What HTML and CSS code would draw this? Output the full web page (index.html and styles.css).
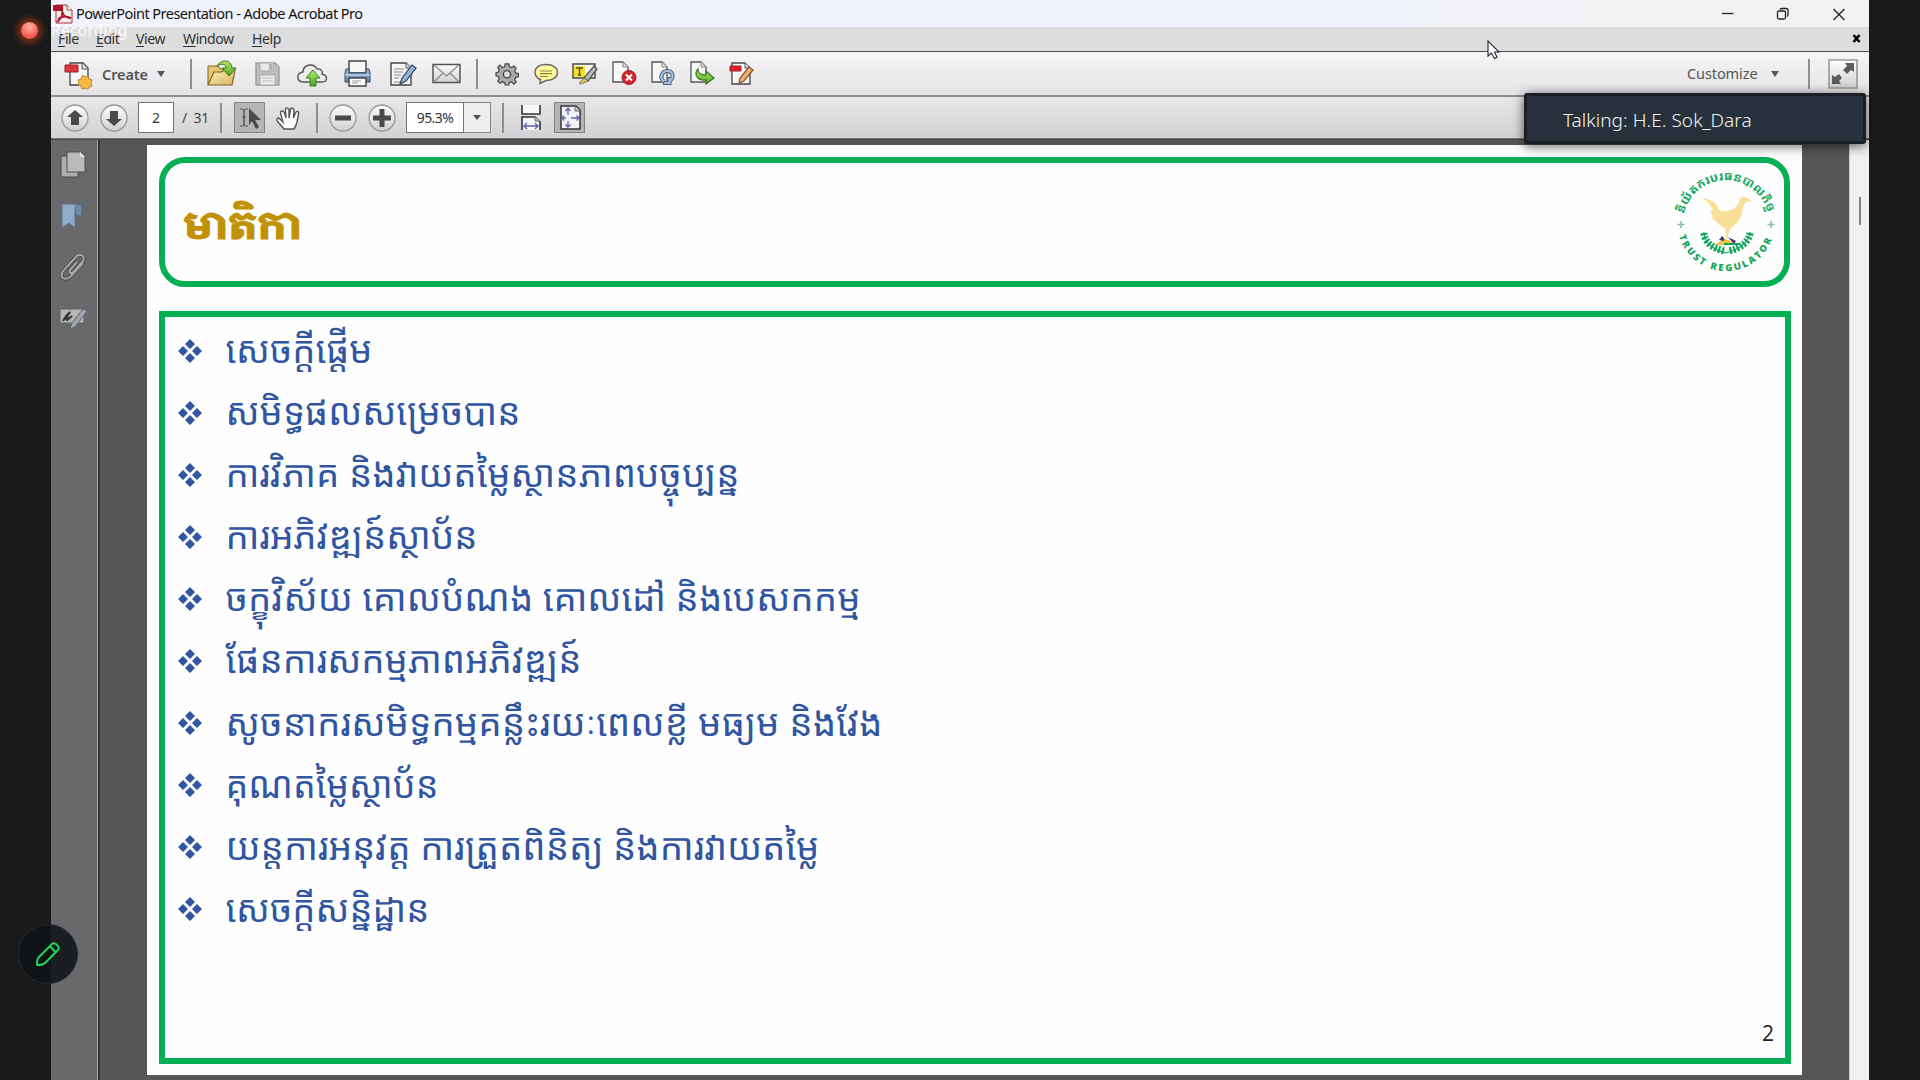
FILE: index.html
```html
<!DOCTYPE html>
<html lang="en">
<head>
<meta charset="utf-8">
<title>PowerPoint Presentation - Adobe Acrobat Pro</title>
<link rel="stylesheet" href="styles.css">
</head>
<body>
<svg width="0" height="0" class="defs">
  <defs>
    <linearGradient id="gray" x1="0" y1="0" x2="0" y2="1"><stop offset="0" stop-color="#fff"/><stop offset="1" stop-color="#cfcfcf"/></linearGradient>
    <linearGradient id="green" x1="0" y1="0" x2="0" y2="1"><stop offset="0" stop-color="#b2ea72"/><stop offset="1" stop-color="#4fa61e"/></linearGradient>
    <linearGradient id="folder" x1="0" y1="0" x2="1" y2="1"><stop offset="0" stop-color="#fdf0b8"/><stop offset="1" stop-color="#d9b65e"/></linearGradient>
    <linearGradient id="blue" x1="0" y1="0" x2="0" y2="1"><stop offset="0" stop-color="#9cc0e2"/><stop offset="1" stop-color="#5a80aa"/></linearGradient>
    <symbol id="sheet" viewBox="0 0 32 32"><path d="M8 5h10l5 5v15H8z" fill="#f7f7f7" stroke="#555" stroke-width="1.3"/><path d="M18 5v5h5" fill="#ddd" stroke="#888"/></symbol>
    <symbol id="diamonds" viewBox="0 0 24 24"><path d="M12 0l5 5-5 5-5-5zM5 7l5 5-5 5-5-5zM19 7l5 5-5 5-5-5zM12 14l5 5-5 5-5-5z"/></symbol>
  </defs>
</svg>
<div class="screen">
  <main class="app">
    <header class="titlebar">
      <svg class="app-icon" width="20" height="20" viewBox="0 0 20 20"><path d="M3 1h11l5 5v13H3z" fill="#eee" stroke="#a33" /><path d="M14 1v5h5" fill="#fff" stroke="#a44"/><path d="M0 1h10v6H0z" fill="#b3132b"/><path d="M9 6c1 4 0 8-5 12M9 7c1 4 4 7 9 7M5 15c4-3 8-3 13-1" fill="none" stroke="#b3132b" stroke-width="1.8"/></svg>
      <span class="title">PowerPoint Presentation - Adobe Acrobat Pro</span>
      <svg class="win-controls" width="136" height="20" viewBox="0 0 136 20"><g fill="none" stroke="#222" stroke-width="1.3"><path d="M6 9.5h11.500"/><rect x="61.500" y="7" width="8" height="8" rx="1.500"/><path d="M64 5.500q.5-1 2-1h4q2 0 2 2v4q0 1.500-1 2"/><path d="M117.500 5l11 11M128.500 5l-11 11"/></g></svg>
    </header>
    <nav class="menubar">
      <span class="m-file"><u>F</u>ile</span><span class="m-edit"><u>E</u>dit</span><span class="m-view"><u>V</u>iew</span><span class="m-window"><u>W</u>indow</span><span class="m-help"><u>H</u>elp</span>
      <svg class="close-doc" width="9" height="9" viewBox="0 0 9 9"><path d="M1.500 1l6 7M7.500 1l-6 7" stroke="#000" stroke-width="2.600"/></svg>
    </nav>
    <div class="toolbar">
      <button class="create">
        <svg width="32" height="32" viewBox="0 0 32 32"><path d="M8 5h13l5 5v17H8z" fill="#f7f7f7" stroke="#444" stroke-width="1.300"/><path d="M20 5v6h6" fill="#ddd" stroke="#555"/><path d="M3 7h13v7H3z" fill="#d9363f" stroke="#a51c28"/><path d="M21 17l2 2 3-1 1 3 3 1-1 3 1 3-3 1-1 2-3-1-3 1-1-3-3-1 1-3-1-2 3-1z" fill="#f6b945" stroke="#b9812a"/></svg>
        <span>Create</span><i class="caret"></i>
      </button>
      <i class="sep sep-a"></i>
      <div class="group files">
        <svg width="32" height="32" viewBox="0 0 32 32"><path d="M2 8h10l2 3h12v15H2z" fill="#e5c66e" stroke="#806127"/><path d="M2 27l6-13h8l2-2h11l-3 15z" fill="url(#folder)" stroke="#806127" stroke-width="1.200"/><path d="M11 8C15 1 25 1 26 10h4l-7 8-7-8h4c0-4-4-5-9-2z" fill="url(#green)" stroke="#347a16"/></svg>
        <svg width="32" height="32" viewBox="0 0 32 32"><path d="M5 5h19l4 4v18H5z" fill="#bdbdbd" stroke="#9c9c9c" stroke-width="1.400"/><path d="M9 5h13v8H9z" fill="#e7e7e7" stroke="#aaa"/><path d="M18 6h3v6h-3z" fill="#b2b2b2"/><path d="M9 17h15v10H9z" fill="#eee" stroke="#a9a9a9"/><path d="M11 20h11M11 23h11" stroke="#bbb"/></svg>
        <svg width="32" height="32" viewBox="0 0 32 32"><path d="M8 24c-8 0-8-9-1-10 0-7 10-10 14-3 5-1 6 4 5 5 7 2 5 8 0 8z" fill="#ececec" stroke="#555" stroke-width="1.400"/><path d="M17 12l7 8h-4v8h-6v-8h-4z" fill="url(#green)" stroke="#348020"/></svg>
        <svg width="32" height="32" viewBox="0 0 32 32"><path d="M8 3h17v12H8z" fill="#f6f6f6" stroke="#444" stroke-width="1.400"/><path d="M5 11h3v4h17v-4h3l1 4v9H4v-9z" fill="url(#blue)" stroke="#2e4965"/><path d="M4 17h25" stroke="#dce9f5"/><path d="M8 20h17v8H8z" fill="#fff" stroke="#444" stroke-width="1.400"/><path d="M11 23h9M11 25h6" stroke="#999"/></svg>
        <svg width="32" height="32" viewBox="0 0 32 32"><path d="M5 5h15l5 5v17H5z" fill="#f5f5f5" stroke="#444" stroke-width="1.400"/><path d="M20 5v5h5" fill="#ddd" stroke="#555"/><path d="M8 11h10M8 14h9M8 17h7M8 20h5M8 24h9" stroke="#888"/><path d="M26 7l4 3-10 13-6 3 2-6z" fill="#8fb4dc" stroke="#2f455f" stroke-width="1.200"/></svg>
        <svg width="32" height="32" viewBox="0 0 32 32"><path d="M2 6.500h27v18H2z" fill="url(#gray)" stroke="#555" stroke-width="1.500"/><path d="M3 7l12.500 11L28 7M3 24l9-9M28 24l-9-9" fill="none" stroke="#888" stroke-width="1.200"/></svg>
      </div>
      <i class="sep sep-b"></i>
      <div class="group edit">
        <svg width="32" height="32" viewBox="-1.500 -1.500 35 35"><path d="M14 5h4l.6 3 2.400 1 2.600-1.700 2.500 2.500-1.700 2.700 1 2.300 3 .7v3.500l-3 .7-1 2.300 1.700 2.700-2.500 2.500L21 24.500l-2.400 1-.6 2.500h-4l-.6-2.500-2.400-1-2.600 1.700-2.500-2.500 1.700-2.700-1-2.300-2.600-.7v-3.500l2.600-.7 1-2.300-1.700-2.700 2.500-2.500L11 9l2.400-1z" fill="#aaa" stroke="#444" stroke-width="1.300"/><circle cx="16" cy="16.300" r="4" fill="#ddd" stroke="#444" stroke-width="1.500"/></svg>
        <svg width="32" height="32" viewBox="0 0 32 32"><path d="M16 6.500c7.500 0 11.500 3.500 11.500 8S23 22.500 16 22.500l-6 3 .5-4C2 18.500 3 6.500 16 6.500z" fill="#fcf79b" stroke="#666" stroke-width="1.400"/><path d="M10 13h12M10 15.700h12M10 18.500h8" stroke="#8d853d" stroke-width="1.200"/></svg>
        <svg width="32" height="32" viewBox="0 0 32 32"><path d="M4 6h22v14H4z" fill="#fff" stroke="#444" stroke-width="1.400"/><path d="M5 8h11v11H5z" fill="#f4df2a"/><path d="M7 10h7M10.500 10v7M9 17h3" stroke="#554b0d" stroke-width="1.300"/><path d="M25 8l3 3-9 12-4-3z" fill="#bbb" stroke="#555" stroke-width="1.300"/><path d="M15 20l4 3-7 3-2-1z" fill="#d7ca57" stroke="#777"/></svg>
        <svg width="32" height="32" viewBox="0 0 32 32"><use href="#sheet" x="-3" y="-1" width="32" height="32"/><circle cx="21" cy="19.500" r="7" fill="#d3262e" stroke="#9f1a22"/><path d="M18 16.500l6 6M24 16.500l-6 6" stroke="#fff" stroke-width="2"/></svg>
        <svg width="32" height="32" viewBox="0 0 32 32"><use href="#sheet" x="-3" y="-1" width="32" height="32"/><path d="M17 23.500c-5-4-2-10.500 3.500-10.500 6 0 7 8 1 10.500M16 25h6.500v-6" fill="none" stroke="#49627d" stroke-width="4"/><path d="M17 23.500c-5-4-2-10.500 3.500-10.500 6 0 7 8 1 10.500M17 25h5.500v-5" fill="none" stroke="#a9c4de" stroke-width="2"/></svg>
        <svg width="32" height="32" viewBox="0 0 32 32"><use href="#sheet" x="-3" y="-1" width="32" height="32"/><path d="M12 11c0 5 3 6 8 6v-4l8 7-8 6v-4c-8 1-13-5-8-11z" fill="url(#green)" stroke="#347a20" stroke-width="1.200"/></svg>
        <svg width="32" height="32" viewBox="0 0 32 32"><path d="M7 5h13l5 5v16H7z" fill="#f8f8f8" stroke="#444" stroke-width="1.300"/><path d="M20 5v5h5" fill="#ddd" stroke="#555"/><path d="M5 8h11v5H5z" fill="#d8232d" stroke="#aa1720"/><path d="M24 9l4 3-9 11-5 2 1-5z" fill="#efb070" stroke="#81502a" stroke-width="1.200"/></svg>
      </div>
      <div class="right">
        <span class="customize">Customize</span><i class="caret"></i><i class="sep"></i>
        <svg class="expand" width="30" height="30" viewBox="0 0 30 30"><path d="M1 1h28v28H1z" fill="url(#gray)" stroke="#999" stroke-width="1.600"/><path d="M17 4h9v9l-3-2-4 4-4-4 4-4zM4 25v-9l3 2 4-3 3 4-3 3 2 3z" fill="#5c5c5e"/></svg>
      </div>
    </div>
    <div class="toolbar second">
      <svg class="up" width="28" height="28" viewBox="0 0 28 28"><circle cx="14" cy="14" r="13" fill="url(#gray)" stroke="#999" stroke-width="1.300"/><path d="M14 6l8 7h-4v8h-8v-8H6z" fill="#4b4b4c"/></svg>
      <svg class="down" width="28" height="28" viewBox="0 0 28 28"><circle cx="14" cy="14" r="13" fill="url(#gray)" stroke="#999" stroke-width="1.300"/><path d="M14 22l8-7h-4V7h-8v8H6z" fill="#4b4b4c"/></svg>
      <span class="field page-no">2</span><span class="page-total">/&nbsp; 31</span><i class="sep sep-c"></i>
      <span class="pressed select"><svg width="28" height="29" viewBox="0 0 28 29"><path d="M4 6h2q2 0 2 2v13q0 2-2 2H4M12 6h-2q-2 0-2 2v13q0 2 2 2h2M6 14h4" fill="none" stroke="#555"/><path d="M13 5l12 12h-6l4 7-3 2-4-8-3 4z" fill="#4a4a4a"/></svg></span>
      <svg class="hand" width="26" height="28" viewBox="0 0 26 28"><path d="M9 25L3 18q-2-3 0-4 1 0 3 2l2 2L5.500 9q0-2 1.500-2T9.500 9l1.500 5L10.500 6q0-2 1.500-2T14 6v8L15.500 6q0-2 1.500-2T19 6l-.5 8 2-5q1-2 2.300-1.500T23.500 10L22 18q-1 4-3 7z" fill="#fff" stroke="#555" stroke-width="1.400"/></svg>
      <i class="sep sep-d"></i>
      <svg class="minus" width="28" height="28" viewBox="0 0 28 28"><circle cx="14" cy="14" r="13" fill="url(#gray)" stroke="#999" stroke-width="1.300"/><path d="M6 11.500h16v5H6z" fill="#4b4b4c"/></svg>
      <svg class="plus" width="28" height="28" viewBox="0 0 28 28"><circle cx="14" cy="14" r="13" fill="url(#gray)" stroke="#999" stroke-width="1.300"/><path d="M5 11.500h6.500V5h5v6.500H23v5h-6.500V23h-5v-6.500H5z" fill="#4b4b4c"/></svg>
      <span class="field zoom">95.3%</span><span class="drop"><i class="caret small"></i></span><i class="sep sep-e"></i>
      <svg class="fit-width" width="20" height="26" viewBox="0 0 20 26"><path d="M1 0v9h18V0M1 25V12h13l5 5v8" fill="#f7f7f7" stroke="#333" stroke-width="1.600"/><path d="M14 12v4h5" fill="#bbb" stroke="#777"/><path d="M3 21h14M6 18l-3 3 3 3M14 18l3 3-3 3" fill="none" stroke="#5f63ad" stroke-width="1.400"/></svg>
      <span class="pressed fit-page"><svg width="28" height="29" viewBox="0 0 28 29"><path d="M5 3h15l4 4v19H5z" fill="#f3f3f5" stroke="#333" stroke-width="1.500"/><path d="M19 3v5h5" fill="#ccc" stroke="#666"/><path d="M12 12V5M9.500 8L12 5l2.500 3M12 18v6M9.500 21.500L12 24l2.500-2.500M10 15H6M8 12.500L6 15l2 2.500M15 15h8M20.500 12.500L23 15l-2.500 2.500" fill="none" stroke="#6065b2" stroke-width="1.300"/></svg></span>
    </div>
    <section class="workspace">
      <aside class="sidebar">
        <svg width="26" height="28" viewBox="0 0 26 28"><path d="M1 5h17v21H1z" fill="#aeaeae" stroke="#474747"/><path d="M7 1h14l4 4v16H7z" fill="#bababa" stroke="#505050"/><path d="M20 1v5h5z" fill="#ddd"/></svg>
        <svg width="26" height="28" viewBox="0 0 26 28"><path d="M14 2h8v12h-6z" fill="#6f8ba6" stroke="#4a5d70"/><path d="M2 2h15q-2 1-2 4v20l-6-5-7 5z" fill="#8facca" stroke="#5d7186"/></svg>
        <svg width="26" height="28" viewBox="0 0 26 28"><path d="M17 9L10 17q-1 3 1 3t5-4l7-8q2-5-2-6t-6 3L3 18q-3 5 0 7t7-1l14-15" fill="none" stroke="#4b4b4d" stroke-width="3.600"/><path d="M17 9L10 17q-1 3 1 3t5-4l7-8q2-5-2-6t-6 3L3 18q-3 5 0 7t7-1l13-14" fill="none" stroke="#aaa" stroke-width="1.900"/></svg>
        <svg width="28" height="28" viewBox="0 0 28 28"><path d="M1 5h24v14H1z" fill="#b5b5b5" stroke="#626262"/><path d="M4 17q3-6 7-9-5 7-3 8l5-4" fill="none" stroke="#333" stroke-width="2"/><path d="M24 5l4 2-12 16-5 2 2-6z" fill="#9fa5b0" stroke="#61656e"/></svg>
      </aside>
      <div class="canvas">
        <article class="slide">
          <header class="slide-head">
            <svg width="160" height="100" viewBox="0 0 160 100"><text class="slide-title" x="18" y="75.500" textLength="119" lengthAdjust="spacingAndGlyphs">មាតិកា</text></svg>
            <svg class="logo" width="120" height="120" viewBox="-62 -60 120 120">
              <defs><path id="arc-top" d="M-42 -9A43 43 0 0 1 42 -9"/><path id="arc-bottom" d="M-47 13A49 49 0 0 0 47 13"/></defs>
              <text class="logo-km"><textPath href="#arc-top" textLength="115" lengthAdjust="spacingAndGlyphs">និយ័តករបរធនបាលកិច្ច</textPath></text>
              <text class="logo-en"><textPath href="#arc-bottom" textLength="122">TRUST REGULATOR</textPath></text>
              <path d="M-45-2v7M-48.500 1.500h7M45-2v7M41.500 1.500h7" stroke="#7cc79c" stroke-width="1.600"/>
              <path d="M-24-25q5 0 10 3 5 2 6 8 5 4 13 1 7-3 9-11 2-4 7-1l5 3-6 1q-4 5-4 11-2 9-10 14-4 4-4 11h-2l-1-10q-7-3-10-8l-5-2 3-1-3-7 3 1q-3-8-11-13z" fill="#f9e09a"/>
              <path d="M-12 22q6-3 10-7l4 2q5 1 9 5z" fill="#efc542"/><path d="M-7 17l3-4 2 2v3zM2 14l8 4-2 3z" fill="#4a3192"/><path d="M-2 21h15" stroke="#1aa35c" stroke-width="2"/>
              <g fill="none" stroke="#12a65b"><path d="M-22 9q0 15 22 21 22-6 24-21" stroke-width="1.200"/><path d="M-22 10q1 13 20 18M24 10q-2 13-21 18" stroke-width="7" stroke-dasharray="2.200 1.600"/></g>
            </svg>
          </header>
          <div class="slide-body">
            <ul class="agenda">
              <li><svg class="bullet"><use href="#diamonds"/></svg><svg class="line"><text x="-.5" y="38.500" textLength="147" lengthAdjust="spacingAndGlyphs">សេចក្តីផ្តើម</text></svg></li>
              <li><svg class="bullet"><use href="#diamonds"/></svg><svg class="line"><text x="-.5" y="38.500" textLength="295" lengthAdjust="spacingAndGlyphs">សមិទ្ធផលសម្រេចបាន</text></svg></li>
              <li><svg class="bullet"><use href="#diamonds"/></svg><svg class="line"><text x="-.5" y="38.500" textLength="514" lengthAdjust="spacingAndGlyphs">ការវិភាគ និងវាយតម្លៃស្ថានភាពបច្ចុប្បន្ន</text></svg></li>
              <li><svg class="bullet"><use href="#diamonds"/></svg><svg class="line"><text x="-.5" y="38.500" textLength="252" lengthAdjust="spacingAndGlyphs">ការអភិវឌ្ឍន៍ស្ថាប័ន</text></svg></li>
              <li><svg class="bullet"><use href="#diamonds"/></svg><svg class="line"><text x="-.5" y="38.500" textLength="635" lengthAdjust="spacingAndGlyphs">ចក្ខុវិស័យ គោលបំណង គោលដៅ និងបេសកកម្ម</text></svg></li>
              <li><svg class="bullet"><use href="#diamonds"/></svg><svg class="line"><text x="-.5" y="38.500" textLength="356" lengthAdjust="spacingAndGlyphs">ផែនការសកម្មភាពអភិវឌ្ឍន៍</text></svg></li>
              <li><svg class="bullet"><use href="#diamonds"/></svg><svg class="line"><text x="-.5" y="38.500" textLength="657" lengthAdjust="spacingAndGlyphs">សូចនាករសមិទ្ធកម្មគន្លឹះរយៈពេលខ្លី មធ្យម និងវែង</text></svg></li>
              <li><svg class="bullet"><use href="#diamonds"/></svg><svg class="line"><text x="-.5" y="38.500" textLength="213" lengthAdjust="spacingAndGlyphs">គុណតម្លៃស្ថាប័ន</text></svg></li>
              <li><svg class="bullet"><use href="#diamonds"/></svg><svg class="line"><text x="-.5" y="38.500" textLength="594" lengthAdjust="spacingAndGlyphs">យន្តការអនុវត្ត ការត្រួតពិនិត្យ និងការវាយតម្លៃ</text></svg></li>
              <li><svg class="bullet"><use href="#diamonds"/></svg><svg class="line"><text x="-.5" y="38.500" textLength="204" lengthAdjust="spacingAndGlyphs">សេចក្តីសន្និដ្ឋាន</text></svg></li>
            </ul>
            <span class="slide-no">2</span>
          </div>
        </article>
      </div>
      <div class="scrollbar"><i class="thumb"></i></div>
    </section>
  </main>
  <div class="rec-dot"></div>
  <div class="rec-label">Recording</div>
  <div class="talking">Talking: H.E. Sok_Dara</div>
  <div class="annotate"><svg width="24" height="24" viewBox="0 0 24 24"><path d="M1 23q0-6 2-8L16 2q2-2 5 1t1 5L9 21q-2 2-8 2zM14 4.500l5.500 5.500" fill="none" stroke="#23d959" stroke-width="1.900" stroke-linejoin="round"/></svg></div>
  <svg class="cursor" width="13" height="20" viewBox="0 0 13 20"><path d="M1 1v15l3.500-3 3 5.500 2.500-1.200L7.500 12H12z" fill="#fff" stroke="#223" stroke-width="1.100"/></svg>
</div>
</body>
</html>
```
FILE: styles.css
```css
* { box-sizing: border-box; }
body { margin: 0; background: #1a1a1a; overflow: hidden; font-family: "Noto Sans", "Open Sans", sans-serif; color: #222; }
.defs { position: absolute; }
.screen { position: relative; width: 1920px; height: 1080px; padding: 0 51px; overflow: hidden; background: #1a1a1a; }
.app { display: flex; flex-direction: column; width: 1818px; height: 1080px; background: #565656; }
svg { display: block; flex: none; }
.titlebar { display: flex; align-items: center; height: 27px; padding-left: 2px; background: linear-gradient(90deg, #f1f3fb, #eff2fb 70%, #f2f2f5 85%); }
.title { margin-left: 3px; padding-bottom: 2px; font-size: 14.500px; letter-spacing: -.52px; color: #111; white-space: nowrap; }
.win-controls { margin-left: auto; margin-right: 17px; }
.menubar { display: flex; align-items: center; height: 24px; padding-bottom: 1px; background: #dddddd; font-size: 14px; letter-spacing: -.4px; color: #333; }
.menubar span { flex: none; }
.menubar u { text-underline-offset: 2px; }
.m-file { width: 38px; margin-left: 7px; }
.m-edit { width: 40px; }
.m-view { width: 47px; }
.m-window { width: 69px; }
.close-doc { margin-left: auto; margin-right: 8px; }
.toolbar { display: flex; align-items: center; height: 44px; border-top: 1px solid #4a4a4d; background: linear-gradient(#f6f5f6, #e5e3e5); flex: none; }
.toolbar.second { height: 44px; border-top: 2px solid #8e8e90; border-bottom: 1px solid #77777a; background: linear-gradient(#e9e8e9, #d3d1d3); }
.create { display: flex; align-items: center; width: 139px; margin: 0; padding: 0 0 0 11px; border: 0; background: none; font: 600 14.500px "Noto Sans", sans-serif; letter-spacing: -.1px; color: #555; }
.create span { width: 47px; margin-left: 8px; text-align: left; }
.caret { width: 0; height: 0; border: 4.500px solid transparent; border-top: 6px solid #555; border-bottom: 0; flex: none; }
.create .caret { margin-left: 8px; }
.caret.small { border-width: 5px 4px 0; }
.sep { width: 2px; height: 30px; background: #8d8d8f; flex: none; }
.group { display: flex; }
.files { margin-left: 14px; gap: 13px; }
.sep-b { margin-left: 13px; }
.edit { margin-left: 13px; gap: 7px; }
.right { display: flex; align-items: center; margin-left: auto; margin-right: 11px; }
.customize { width: 71px; padding-bottom: 1px; font-size: 14.500px; letter-spacing: -.1px; color: #555; }
.right .caret { margin-left: 13px; }
.right .sep { margin-left: 29px; margin-right: 18px; }
.up { margin-left: 10px; }
.down { margin-left: 11px; }
.field { display: flex; align-items: center; justify-content: center; height: 31px; border: 1px solid #727272; background: #fff; font-size: 14px; color: #333; flex: none; }
.page-no { width: 36px; margin-left: 10px; }
.page-total { width: 31px; margin-left: 8px; font-size: 14px; letter-spacing: -.3px; color: #444; white-space: nowrap; }
.sep-c { margin-left: 7px; }
.pressed { display: flex; align-items: center; justify-content: center; width: 31px; height: 31px; border: 1px solid #848484; background: #b5b5b5; flex: none; }
.select { margin-left: 12px; }
.hand { margin-left: 10px; }
.sep-d { margin-left: 15px; }
.minus { margin-left: 11px; }
.plus { margin-left: 11px; }
.zoom { width: 58px; margin-left: 10px; letter-spacing: -.6px; }
.drop { display: flex; align-items: center; justify-content: center; width: 27px; height: 31px; border: 1px solid #888; border-left: 0; background: #eee; }
.sep-e { margin-left: 11px; }
.fit-width { margin-left: 17px; }
.fit-page { margin-left: 13px; }
.workspace { display: flex; height: 941px; border-top: 1px solid #444; flex: none; }
.sidebar { display: flex; flex-direction: column; align-items: center; gap: 23px; width: 49px; padding: 11px 4px 0 0; background: #69696b; border-right: 2px solid #353539; box-shadow: inset -1px 0 #a0a0a2; flex: none; }
.canvas { width: 1749px; padding: 5px 0 0 47px; background: #565656; flex: none; }
.slide { width: 1655px; height: 930px; padding: 12px 11px 10px 12px; background: #fefefe; }
.slide-head { display: flex; justify-content: space-between; width: 1631px; height: 130px; border: 6px solid #05b054; border-radius: 26px; }
.slide-title { font: 700 38px "Noto Serif Khmer", "Khmer OS Muol Light", "Noto Sans Khmer", sans-serif; fill: #c19208; stroke: #c19208; stroke-width: 1.200px; }
.logo-km { font: 700 12px "Noto Sans Khmer", sans-serif; fill: #13a75b; }
.logo-en { font: 800 9.500px "Open Sans", sans-serif; fill: #13a75b; }
.slide-body { position: relative; width: 1632px; height: 753px; margin-top: 24px; padding: 7px 0 0 13px; border: 6px solid #05b054; }
.agenda { margin: 0; padding: 0; list-style: none; }
.agenda li { display: flex; height: 62.100px; }
.bullet { width: 24px; height: 24px; margin-top: 14.500px; fill: #3156a1; }
.line { width: 720px; height: 62px; margin-left: 24px; overflow: visible; fill: #3156a1; font: 37px "Khmer OS Siemreap", "Noto Sans Khmer", sans-serif; }
.slide-no { position: absolute; right: 11px; bottom: 11px; font: 500 21px "Open Sans", sans-serif; color: #222; }
.scrollbar { width: 20px; padding: 57px 0 0 9px; background: #f0eff2; border-left: 1px solid #ccc; }
.thumb { display: block; width: 2px; height: 28px; background: #858587; }
.rec-dot { position: absolute; left: 21px; top: 22px; width: 17px; height: 17px; border-radius: 50%; background: radial-gradient(circle at 50% 30%, #ffb2a8, #fa594e 65%); box-shadow: 0 0 6px 4px #7a2d17; }
.rec-label { position: absolute; left: 51px; top: 19px; font-size: 15.500px; line-height: 22px; letter-spacing: .3px; color: rgba(255,255,255,.88); }
.talking { position: absolute; left: 1524px; top: 93px; width: 342px; height: 51px; padding-left: 36px; border: 3px solid #1b2026; border-radius: 3px; background: #27313b; box-shadow: 0 2px 12px rgba(0,0,0,.65); color: #f4f4f4; font-size: 19px; font-weight: 350; line-height: 48px; letter-spacing: .05px; }
.annotate { position: absolute; left: 18px; top: 924px; display: flex; align-items: center; justify-content: center; width: 60px; height: 60px; border: 1px solid #242b32; border-radius: 50%; background: rgba(15,19,22,.88); }
.cursor { position: absolute; left: 1487px; top: 40px; }
```
